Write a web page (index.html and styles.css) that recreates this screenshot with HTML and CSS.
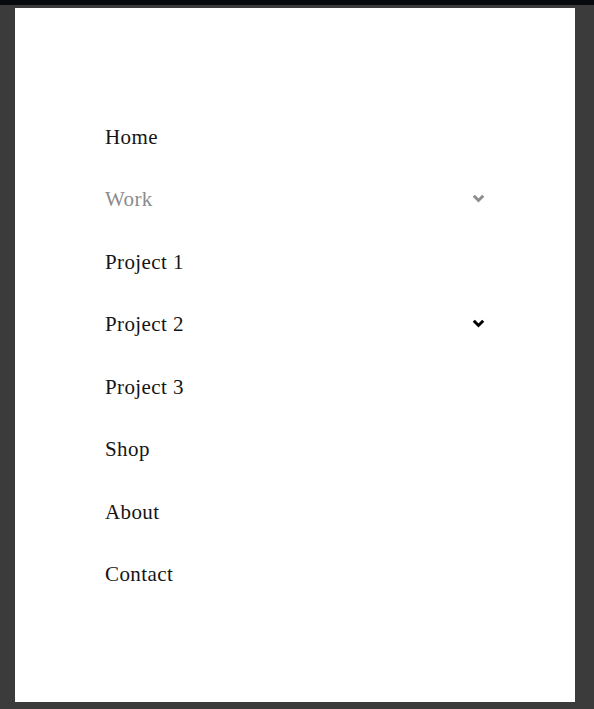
FILE: index.html
```html
<!DOCTYPE html>
<html lang="en">
<head>
  <meta charset="UTF-8" />
  <meta name="viewport" content="width=device-width, initial-scale=1.0"/>
  <title>Menu</title>
  <link rel="stylesheet" href="styles.css">
</head>
<body>

  <div class="top-bar"></div>

  <!-- Side menu panel -->
  <nav class="menu-panel">
    <ul class="menu">
      <li class="menu-item"><a href="#">Home</a></li>
      <li class="menu-item is-open">
        <a href="#">Work</a>
        <svg class="chevron" viewBox="0 0 13 9" width="13" height="9"><path d="M1.8 1.8 L6.5 6.5 L11.2 1.8" /></svg>
      </li>
      <li class="menu-item"><a href="#">Project 1</a></li>
      <li class="menu-item">
        <a href="#">Project 2</a>
        <svg class="chevron" viewBox="0 0 13 9" width="13" height="9"><path d="M1.8 1.8 L6.5 6.5 L11.2 1.8" /></svg>
      </li>
      <li class="menu-item"><a href="#">Project 3</a></li>
      <li class="menu-item"><a href="#">Shop</a></li>
      <li class="menu-item"><a href="#">About</a></li>
      <li class="menu-item"><a href="#">Contact</a></li>
    </ul>
  </nav>

</body>
</html>
```

FILE: styles.css
```css
body {
  margin: 0;
  background: #3b3b3b;
  font-family: 'Liberation Serif', 'DejaVu Serif', serif;
}

.top-bar {
  height: 5px;
  background: #070a0e;
}

.menu-panel {
  box-sizing: border-box;
  width: 560px;
  height: 694px;
  margin: 3px 0 0 15px;
  padding: 98px 90px 0;
  background: #fff;
}

.menu {
  list-style: none;
  margin: 0;
  padding: 0;
}

.menu-item {
  display: flex;
  align-items: center;
  justify-content: space-between;
  height: 62.5px;
}

.menu-item a {
  color: #151515;
  text-decoration: none;
  font-size: 21px;
  letter-spacing: 0.4px;
}

.chevron {
  margin: 0 0 2px;
  fill: none;
  stroke: #000;
  stroke-width: 3;
}

.menu-item.is-open a {
  color: #8c8c8c;
}

.menu-item.is-open .chevron {
  stroke: #8c8c8c;
}
```
